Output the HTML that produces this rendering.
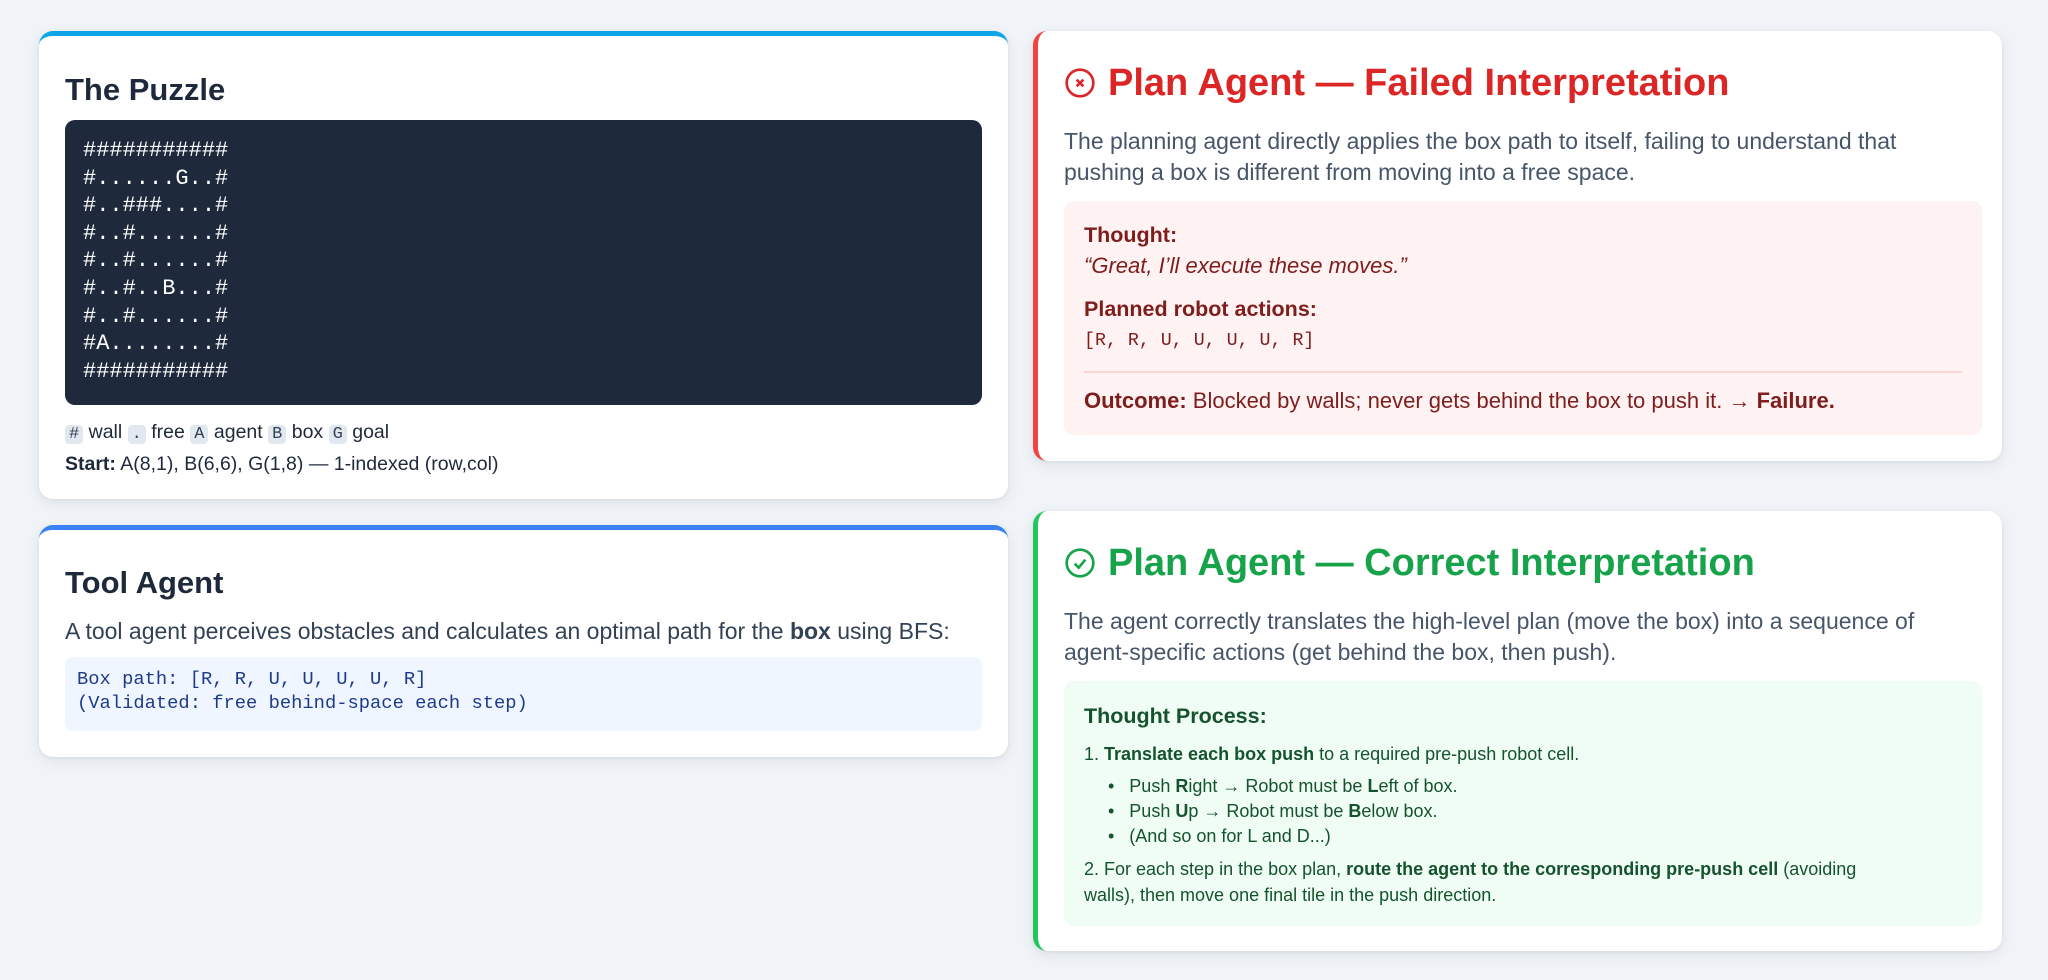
<!DOCTYPE html>
<html><head><meta charset="utf-8">
<style>
*{box-sizing:border-box;margin:0;padding:0}
body{width:2048px;height:980px;background:#f0f4f8;font-family:"Liberation Sans",sans-serif;position:relative;overflow:hidden;color:#1e293b}
.card{position:absolute;background:#fff;border-radius:14px;box-shadow:0 4px 14px rgba(15,23,42,.08),0 1px 3px rgba(15,23,42,.06)}
.topb{border-top:5px solid #0ea5e9}
.topb2{border-top:5px solid #3b82f6}
h2{font-size:31px;font-weight:700;color:#1e293b;position:absolute;left:26px;line-height:1}
pre{font-family:"Liberation Mono","DejaVu Sans Mono",monospace}
.code{position:absolute;left:26px;right:26px;background:#1e293b;color:#fff;border-radius:10px;padding:17px 18px;font-size:22px;line-height:27.6px}
.leg{position:absolute;left:26px;font-size:19.5px;color:#1e293b}
.k{display:inline-block;background:#e2e8f0;border-radius:4px;padding:0 4px;font-family:"Liberation Mono",monospace;font-size:17px;color:#334155}
.rc{border-left:5px solid #ef4444}
.gc{border-left:5px solid #22c55e}
.t{position:absolute;left:26px;font-size:38px;font-weight:700;display:flex;align-items:center;gap:12px;line-height:1}
.p{position:absolute;left:26px;right:30px;font-size:23px;line-height:31px;color:#475569}
.box{position:absolute;left:26px;right:20px;border-radius:10px}
</style></head><body>

<div class="card topb" style="left:39px;top:31px;width:969px;height:468px">
  <h2 style="top:38px">The Puzzle</h2>
  <pre class="code" style="top:84px;height:285px">###########
#......G..#
#..###....#
#..#......#
#..#......#
#..#..B...#
#..#......#
#A........#
###########</pre>
  <div class="leg" style="top:385px"><span class="k">#</span> wall <span class="k">.</span> free <span class="k">A</span> agent <span class="k">B</span> box <span class="k">G</span> goal</div>
  <div class="leg" style="top:417px"><b>Start:</b> A(8,1), B(6,6), G(1,8) — 1-indexed (row,col)</div>
</div>

<div class="card topb2" style="left:39px;top:525px;width:969px;height:232px">
  <h2 style="top:37px">Tool Agent</h2>
  <div class="p" style="top:86px;color:#334155">A tool agent perceives obstacles and calculates an optimal path for the <b>box</b> using BFS:</div>
  <pre style="position:absolute;left:26px;right:26px;top:127px;height:74px;background:#eff6ff;border-radius:8px;padding:10px 12px;font-size:18.8px;line-height:24px;color:#1e3a8a">Box path: [R, R, U, U, U, U, R]
(Validated: free behind-space each step)</pre>
</div>

<div class="card rc" style="left:1033px;top:31px;width:969px;height:430px">
  <div class="t" style="top:33px;color:#dc2626"><svg width="32" height="32" viewBox="0 0 24 24" fill="none" stroke="#dc2626" stroke-width="2"><circle cx="12" cy="12" r="10"/><path d="M9.5 9.5l5 5M14.5 9.5l-5 5"/></svg>Plan Agent — Failed Interpretation</div>
  <div class="p" style="top:95px">The planning agent directly applies the box path to itself, failing to understand that pushing a box is different from moving into a free space.</div>
  <div class="box" style="top:170px;height:234px;background:#fef2f2;color:#7f1d1d;padding:0 20px">
    <div style="position:absolute;left:20px;top:22px;font-size:21.5px;font-weight:700">Thought:</div>
    <div style="position:absolute;left:20px;top:52px;font-size:22px;font-style:italic">“Great, I’ll execute these moves.”</div>
    <div style="position:absolute;left:20px;top:96px;font-size:21.5px;font-weight:700">Planned robot actions:</div>
    <pre style="position:absolute;left:20px;top:130px;font-size:18.3px">[R, R, U, U, U, U, R]</pre>
    <div style="position:absolute;left:20px;right:20px;top:170px;border-top:2px solid #fbd5d5"></div>
    <div style="position:absolute;left:20px;top:187px;font-size:22px"><b>Outcome:</b> Blocked by walls; never gets behind the box to push it. → <b>Failure.</b></div>
  </div>
</div>

<div class="card gc" style="left:1033px;top:511px;width:969px;height:440px">
  <div class="t" style="top:33px;color:#16a34a"><svg width="32" height="32" viewBox="0 0 24 24" fill="none" stroke="#16a34a" stroke-width="2"><circle cx="12" cy="12" r="10"/><path d="M8 12.5l3 3 5-6"/></svg>Plan Agent — Correct Interpretation</div>
  <div class="p" style="top:95px">The agent correctly translates the high-level plan (move the box) into a sequence of agent-specific actions (get behind the box, then push).</div>
  <div class="box" style="top:170px;height:245px;background:#f0fdf4;color:#14532d;font-size:18px">
    <div style="position:absolute;left:20px;top:23px;font-size:21.5px;font-weight:700">Thought Process:</div>
    <div style="position:absolute;left:20px;top:63px">1. <b>Translate each box push</b> to a required pre-push robot cell.</div>
    <div style="position:absolute;left:44px;top:95px">•&nbsp;&nbsp;&nbsp;Push <b>R</b>ight → Robot must be <b>L</b>eft of box.</div>
    <div style="position:absolute;left:44px;top:120px">•&nbsp;&nbsp;&nbsp;Push <b>U</b>p → Robot must be <b>B</b>elow box.</div>
    <div style="position:absolute;left:44px;top:145px">•&nbsp;&nbsp;&nbsp;(And so on for L and D...)</div>
    <div style="position:absolute;left:20px;right:80px;top:175px;line-height:26px">2. For each step in the box plan, <b>route the agent to the corresponding pre-push cell</b> (avoiding walls), then move one final tile in the push direction.</div>
  </div>
</div>

</body></html>
